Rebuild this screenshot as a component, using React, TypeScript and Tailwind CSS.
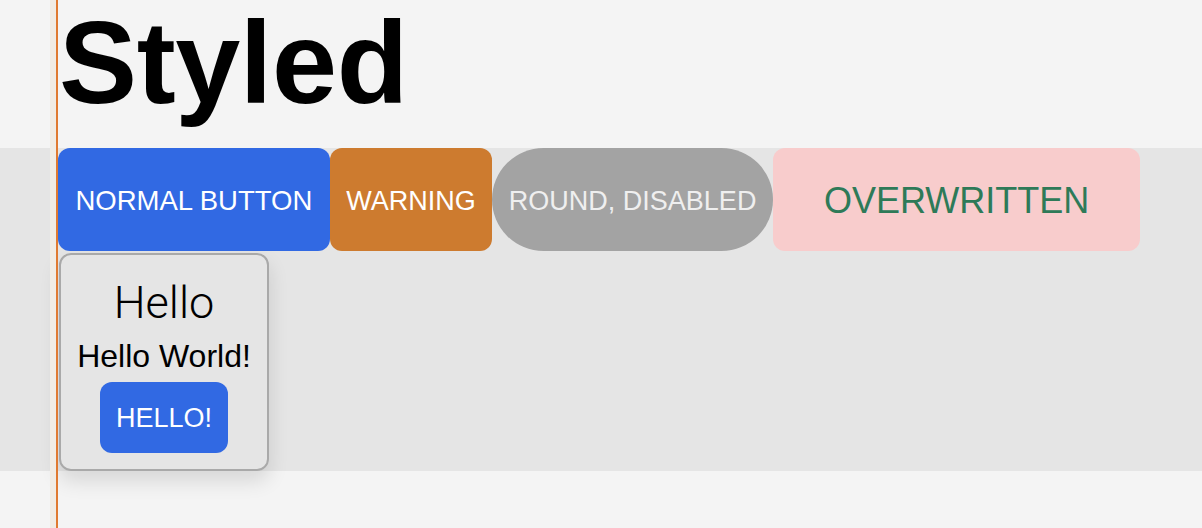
export default function App() {
  return (
    <div className="relative min-h-[528px] bg-[#f4f4f4] font-['Liberation_Sans',sans-serif]">
      {/* guide line on the left */}
      <div className="absolute left-[50px] top-0 bottom-0 w-[8px] bg-[#f1ece4] border-r-2 border-[#e07a30]" />

      {/* heading */}
      <div className="h-[148px] pl-[59px]">
        <h1 className="pt-[2px] text-[117px] leading-[122px] font-bold text-black tracking-[-0.4px]">
          Styled
        </h1>
      </div>

      {/* band with buttons and card */}
      <div className="h-[323px] bg-[#e5e5e5] pl-[58px]">
        <div className="flex">
          <button className="h-[103px] pt-[3px] px-[17.5px] rounded-[12px] bg-[#3169e3] text-white text-[27.5px]">
            NORMAL BUTTON
          </button>
          <button className="h-[103px] pt-[3px] px-[16.5px] rounded-[12px] bg-[#cd7b2f] text-white text-[27px]">
            WARNING
          </button>
          <button
            disabled
            className="h-[103px] pt-[3px] px-[16.5px] rounded-full bg-[#a3a3a3] text-[#efefef] text-[27px]"
          >
            ROUND, DISABLED
          </button>
          <button className="h-[103px] pt-[3px] px-[51px] rounded-[12px] bg-[#f8cccc] text-[#2e7a58] text-[36px]">
            OVERWRITTEN
          </button>
        </div>

        <div className="ml-px mt-[2px] w-[210px] h-[218px] rounded-[12px] border-2 border-[#a9a9a9] shadow-[0_10px_20px_rgba(0,0,0,0.12)] flex flex-col items-center pt-[19px]">
          <div className="text-[45px] leading-[58px] font-light text-black font-['Roboto',sans-serif]">
            Hello
          </div>
          <div className="mt-[6px] text-[32px] leading-[36px] text-black">Hello World!</div>
          <button className="mt-[8px] h-[71px] pt-[2px] px-[16px] rounded-[12px] bg-[#3169e3] text-white text-[27px]">
            HELLO!
          </button>
        </div>
      </div>
    </div>
  );
}
